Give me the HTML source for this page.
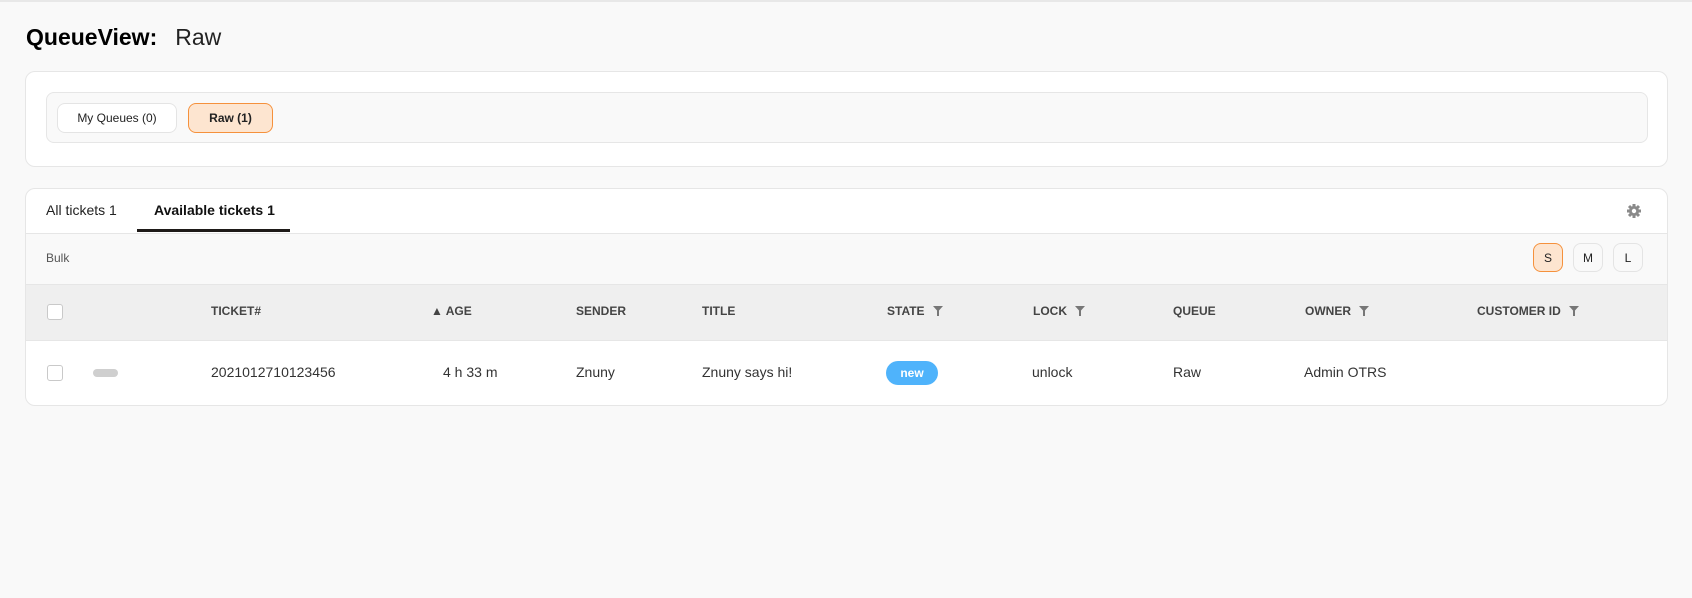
<!DOCTYPE html>
<html><head><meta charset="utf-8"><style>
*{box-sizing:border-box;margin:0;padding:0}
body{width:1692px;height:598px;background:#f9f9f9;font-family:"Liberation Sans",Arial,sans-serif;color:#333;position:relative;overflow:hidden}
.a{position:absolute}
.topbar{left:0;top:0;width:1692px;height:2px;background:#e8e8e8}
.t{white-space:nowrap}
.card{background:#fff;border:1px solid #e6e6e6;border-radius:10px}
.btn{border:1px solid #e4e4e4;border-radius:8px;background:#fff;font-size:12px;display:flex;align-items:center;justify-content:center;color:#222}
.sel{background:#fde5d0;border-color:#f5913c}
.th{font-size:12px;font-weight:bold;color:#444;top:304px}
.td{font-size:14px;color:#333;top:364px}
.cb{width:16px;height:16px;border:1px solid #c9c9c9;border-radius:3px;background:#fff}
.f{display:inline-block;vertical-align:-1px;margin-left:8px}
</style></head><body>
<div class="a topbar"></div>
<div class="a t" style="left:26px;top:24px;font-size:23px;"><b style="color:#000">QueueView:</b><span style="margin-left:18px;color:#222">Raw</span></div>

<div class="a card" style="left:25px;top:71px;width:1643px;height:96px"></div>
<div class="a" style="left:46px;top:92px;width:1602px;height:51px;background:#f9f9f9;border:1px solid #e6e6e6;border-radius:8px"></div>
<div class="a btn" style="left:57px;top:103px;width:120px;height:30px">My Queues (0)</div>
<div class="a btn sel" style="left:188px;top:103px;width:85px;height:30px;font-weight:bold">Raw (1)</div>

<div class="a card" style="left:25px;top:188px;width:1643px;height:218px;overflow:hidden">
 <div class="a" style="left:0;top:44px;width:100%;height:51px;background:#f9f9f9;border-top:1px solid #e6e6e6"></div>
 <div class="a" style="left:0;top:95px;width:100%;height:57px;background:#efefef;border-top:1px solid #e6e6e6;border-bottom:1px solid #e6e6e6"></div>
</div>
<div class="a t" style="left:46px;top:202px;font-size:14px;color:#222">All tickets 1</div>
<div class="a t" style="left:154px;top:202px;font-size:14px;font-weight:bold;color:#111">Available tickets 1</div>
<div class="a" style="left:137px;top:229px;width:153px;height:3px;background:#1e1a18"></div>
<svg class="a" style="left:1626px;top:203px" width="16" height="16" viewBox="0 0 16 16"><g fill="#8a8a8a"><circle cx="8" cy="8" r="5"/><g stroke="#8a8a8a" stroke-width="3"><line x1="8" y1="1" x2="8" y2="15"/><line x1="1" y1="8" x2="15" y2="8"/><line x1="3" y1="3" x2="13" y2="13"/><line x1="13" y1="3" x2="3" y2="13"/></g></g><circle cx="8" cy="8" r="2.2" fill="#fff"/></svg>
<div class="a t" style="left:46px;top:251px;font-size:12px;color:#555">Bulk</div>
<div class="a btn sel" style="left:1533px;top:243px;width:30px;height:29px">S</div>
<div class="a btn" style="left:1573px;top:243px;width:30px;height:29px;background:#f9f9f9">M</div>
<div class="a btn" style="left:1613px;top:243px;width:30px;height:29px;background:#f9f9f9">L</div>

<div class="a cb" style="left:47px;top:304px"></div>
<div class="a t th" style="left:211px">TICKET#</div>
<div class="a t th" style="left:431px">▲ AGE</div>
<div class="a t th" style="left:576px">SENDER</div>
<div class="a t th" style="left:702px">TITLE</div>
<div class="a t th" style="left:887px">STATE<svg class="f" width="10" height="10" viewBox="0 0 10 10"><path d="M0 0H10L6 4.5V10H4V4.5Z" fill="#777"/></svg></div>
<div class="a t th" style="left:1033px">LOCK<svg class="f" width="10" height="10" viewBox="0 0 10 10"><path d="M0 0H10L6 4.5V10H4V4.5Z" fill="#777"/></svg></div>
<div class="a t th" style="left:1173px">QUEUE</div>
<div class="a t th" style="left:1305px">OWNER<svg class="f" width="10" height="10" viewBox="0 0 10 10"><path d="M0 0H10L6 4.5V10H4V4.5Z" fill="#777"/></svg></div>
<div class="a t th" style="left:1477px">CUSTOMER ID<svg class="f" width="10" height="10" viewBox="0 0 10 10"><path d="M0 0H10L6 4.5V10H4V4.5Z" fill="#777"/></svg></div>

<div class="a cb" style="left:47px;top:365px"></div>
<div class="a" style="left:93px;top:369px;width:25px;height:8px;border-radius:4px;background:#cfcfcf"></div>
<div class="a t td" style="left:211px">2021012710123456</div>
<div class="a t td" style="left:443px">4 h 33 m</div>
<div class="a t td" style="left:576px">Znuny</div>
<div class="a t td" style="left:702px">Znuny says hi!</div>
<div class="a" style="left:886px;top:361px;width:52px;height:24px;border-radius:12px;background:#4fb3fb;color:#fff;font-size:12px;font-weight:bold;display:flex;align-items:center;justify-content:center">new</div>
<div class="a t td" style="left:1032px">unlock</div>
<div class="a t td" style="left:1173px">Raw</div>
<div class="a t td" style="left:1304px">Admin OTRS</div>
</body></html>
